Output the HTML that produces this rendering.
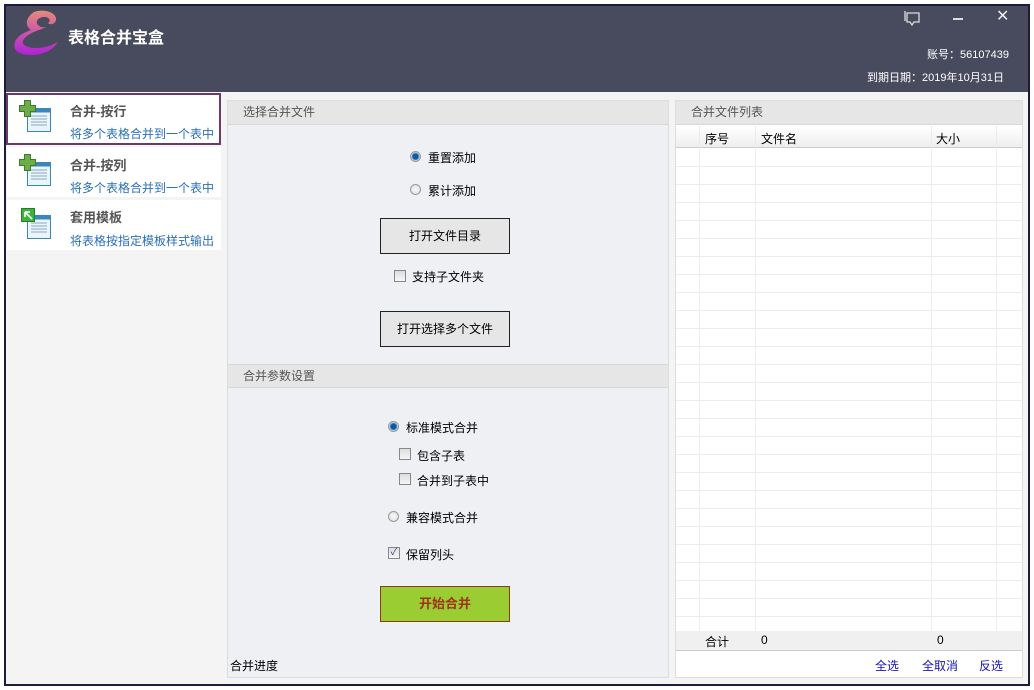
<!DOCTYPE html>
<html><head><meta charset="utf-8"><style>
*{margin:0;padding:0;box-sizing:border-box}
body{width:1034px;height:690px;background:#fff;position:relative;overflow:hidden;font-family:"Liberation Sans","Noto Sans CJK SC",sans-serif;font-size:12px;color:#000}
.a{position:absolute}
.win{left:4px;top:4px;width:1026px;height:682px;border:2px solid #1c1d3a;background:#f4f4f4}
.hdr{left:6px;top:6px;width:1022px;height:86px;background:#484a5e}
.item{left:7px;width:214px;height:50px;background:#fff}
.t1{font-size:13px;font-weight:bold;color:#555}
.t2{font-size:12px;color:#2a6fb5}
.ph{background:#e6e6e6;border-bottom:1px solid #d8d8d8;color:#555;font-size:12px;padding-left:15px;line-height:23px}
.btn{background:#e6e6e6;border:1px solid #222;text-align:center;font-size:12px}
.rad{width:11px;height:11px;border-radius:50%;border:1px solid #999;background:radial-gradient(#f8f8f8,#ddd)}
.rad.on{background:radial-gradient(circle,#0b5aa8 0 2.5px,#6aa0d0 3.5px,#eee 4.5px)}
.cb{width:12px;height:12px;border:1px solid #888;background:linear-gradient(#ddd,#f6f6f6)}
.lk{color:#1515b0;font-size:12px}
</style></head><body>
<div class="a win"></div>
<div class="a hdr"></div>
<svg class="a" style="left:8px;top:8px" width="52" height="52" viewBox="0 0 52 52">
<defs><linearGradient id="g" x1="0" y1="0" x2="0" y2="1"><stop offset="0" stop-color="#e48a7a"/><stop offset="1" stop-color="#b020d8"/></linearGradient></defs>
<path d="M26 4c8-3 20-1 22 6c1 5-5 8-8 5c3-2 2-6-4-6c-6 0-9 5-6 8c2 2 5 3 9 2c-7 3-17 5-23 12c-4 5 2 9 12 9c8 0 15-2 22-6c-5 8-15 13-27 13c-11 0-19-4-16-13c2-6 10-10 16-12c-6-4-6-12 3-18z" fill="url(#g)"/>
</svg>
<div class="a" style="left:68px;top:24px;color:#fff;font-size:16px;font-weight:bold">表格合并宝盒</div>
<svg class="a" style="left:904px;top:11px" width="18" height="16"><path d="M3 2h12v9H10l-2 3-2-3H3z M1 0v10" fill="none" stroke="#ddd" stroke-width="1.3"/></svg>
<div class="a" style="left:953px;top:18px;width:10px;height:2px;background:#ddd"></div>
<div class="a" style="left:996px;top:6px;color:#eee;font-size:16px">✕</div>
<div class="a" style="left:927px;top:46px;color:#fff;font-size:11px">账号：56107439</div>
<div class="a" style="left:867px;top:69px;color:#fff;font-size:11px">到期日期：2019年10月31日</div>

<div class="a" style="left:6px;top:92px;width:216px;height:592px;background:#f4f4f4"></div>
<div class="a item" style="top:93px;border:2px solid #6a3a6a;height:52px;left:6px;width:215px"></div>
<div class="a item" style="top:147px"></div>
<div class="a item" style="top:200px"></div>
<svg class="a" style="left:19px;top:100px" width="34" height="34"><rect x="8.5" y="8.5" width="23" height="23" fill="#eaf4fb" stroke="#3a88b8"/><rect x="8.5" y="8.5" width="23" height="4" fill="#3a88b8"/><path d="M12 16h16M12 19h16M12 22h16M12 25h16" stroke="#8ab"/><path d="M5.5 .5h6v5h5v6h-5v5h-6v-5h-5v-6h5z" fill="#6cad4a" stroke="#3d7a2a"/></svg>
<svg class="a" style="left:19px;top:154px" width="34" height="34"><rect x="8.5" y="8.5" width="23" height="23" fill="#eaf4fb" stroke="#3a88b8"/><rect x="8.5" y="8.5" width="23" height="4" fill="#3a88b8"/><path d="M12 16h16M12 19h16M12 22h16M12 25h16" stroke="#8ab"/><path d="M5.5 .5h6v5h5v6h-5v5h-6v-5h-5v-6h5z" fill="#6cad4a" stroke="#3d7a2a"/></svg>
<svg class="a" style="left:19px;top:207px" width="34" height="34"><rect x="8.5" y="8.5" width="23" height="23" fill="#eaf4fb" stroke="#3a88b8"/><rect x="8.5" y="8.5" width="23" height="4" fill="#3a88b8"/><path d="M12 16h16M12 19h16M12 22h16M12 25h16" stroke="#8ab"/><rect x="2.5" y="1.5" width="13" height="13" fill="#3eb23e" stroke="#2a7a2a"/><path d="M6 5l7 7M6 5h5M6 5v5" stroke="#fff" stroke-width="1.6"/></svg>
<div class="a t1" style="left:70px;top:101px">合并-按行</div>
<div class="a t2" style="left:70px;top:125px">将多个表格合并到一个表中</div>
<div class="a t1" style="left:70px;top:155px">合并-按列</div>
<div class="a t2" style="left:70px;top:179px">将多个表格合并到一个表中</div>
<div class="a t1" style="left:70px;top:207px">套用模板</div>
<div class="a t2" style="left:70px;top:232px">将表格按指定模板样式输出</div>

<div class="a" style="left:227px;top:100px;width:442px;height:578px;background:#eff0f4;border:1px solid #ddd"></div>
<div class="a ph" style="left:228px;top:101px;width:440px;height:24px">选择合并文件</div>
<div class="a rad on" style="left:410px;top:151px"></div><div class="a" style="left:428px;top:149px">重置添加</div>
<div class="a rad" style="left:410px;top:184px"></div><div class="a" style="left:428px;top:182px">累计添加</div>
<div class="a btn" style="left:380px;top:218px;width:130px;height:36px;line-height:34px">打开文件目录</div>
<div class="a cb" style="left:394px;top:270px"></div><div class="a" style="left:412px;top:268px">支持子文件夹</div>
<div class="a btn" style="left:380px;top:311px;width:130px;height:36px;line-height:34px">打开选择多个文件</div>
<div class="a ph" style="left:228px;top:364px;width:440px;height:24px;border-top:1px solid #d8d8d8">合并参数设置</div>
<div class="a rad on" style="left:388px;top:421px"></div><div class="a" style="left:406px;top:419px">标准模式合并</div>
<div class="a cb" style="left:399px;top:448px"></div><div class="a" style="left:417px;top:447px">包含子表</div>
<div class="a cb" style="left:399px;top:473px"></div><div class="a" style="left:417px;top:472px">合并到子表中</div>
<div class="a rad" style="left:388px;top:511px"></div><div class="a" style="left:406px;top:509px">兼容模式合并</div>
<div class="a cb" style="left:388px;top:547px;color:#2a4a9a;font-size:10px;line-height:10px;text-align:center">✓</div><div class="a" style="left:406px;top:546px">保留列头</div>
<div class="a" style="left:380px;top:586px;width:130px;height:36px;background:#9acd32;border:1px solid #8b3a1a;color:#a0321a;font-weight:bold;font-size:13px;text-align:center;line-height:34px">开始合并</div>
<div class="a" style="left:230px;top:657px">合并进度</div>

<div class="a" style="left:675px;top:100px;width:348px;height:578px;background:#fff;border:1px solid #ddd"></div>
<div class="a ph" style="left:676px;top:101px;width:346px;height:24px">合并文件列表</div>
<div class="a" style="left:676px;top:126px;width:346px;height:22px;background:linear-gradient(#fff,#eee);border-bottom:1px solid #ccc"></div>
<svg class="a" style="left:676px;top:126px" width="346" height="525">
<g stroke="#ececec">
<path d="M0 40.5h346M0 58.5h346M0 76.5h346M0 94.5h346M0 112.5h346M0 130.5h346M0 148.5h346M0 166.5h346M0 184.5h346M0 202.5h346M0 220.5h346M0 238.5h346M0 256.5h346M0 274.5h346M0 292.5h346M0 310.5h346M0 328.5h346M0 346.5h346M0 364.5h346M0 382.5h346M0 400.5h346M0 418.5h346M0 436.5h346M0 454.5h346M0 472.5h346M0 490.5h346"/>
<path d="M23.5 0v524M79.5 0v524M255.5 0v524M320.5 0v524"/>
</g>
<rect x="0" y="505" width="346" height="19" fill="#f0f0f0"/>
<path d="M0 524.5h346" stroke="#ccc"/>
</svg>
<div class="a" style="left:705px;top:130px">序号</div>
<div class="a" style="left:761px;top:130px">文件名</div>
<div class="a" style="left:936px;top:130px">大小</div>
<div class="a" style="left:705px;top:633px">合计</div>
<div class="a" style="left:761px;top:633px">0</div>
<div class="a" style="left:937px;top:633px">0</div>
<div class="a lk" style="left:875px;top:657px">全选</div>
<div class="a lk" style="left:922px;top:657px">全取消</div>
<div class="a lk" style="left:979px;top:657px">反选</div>
</body></html>
